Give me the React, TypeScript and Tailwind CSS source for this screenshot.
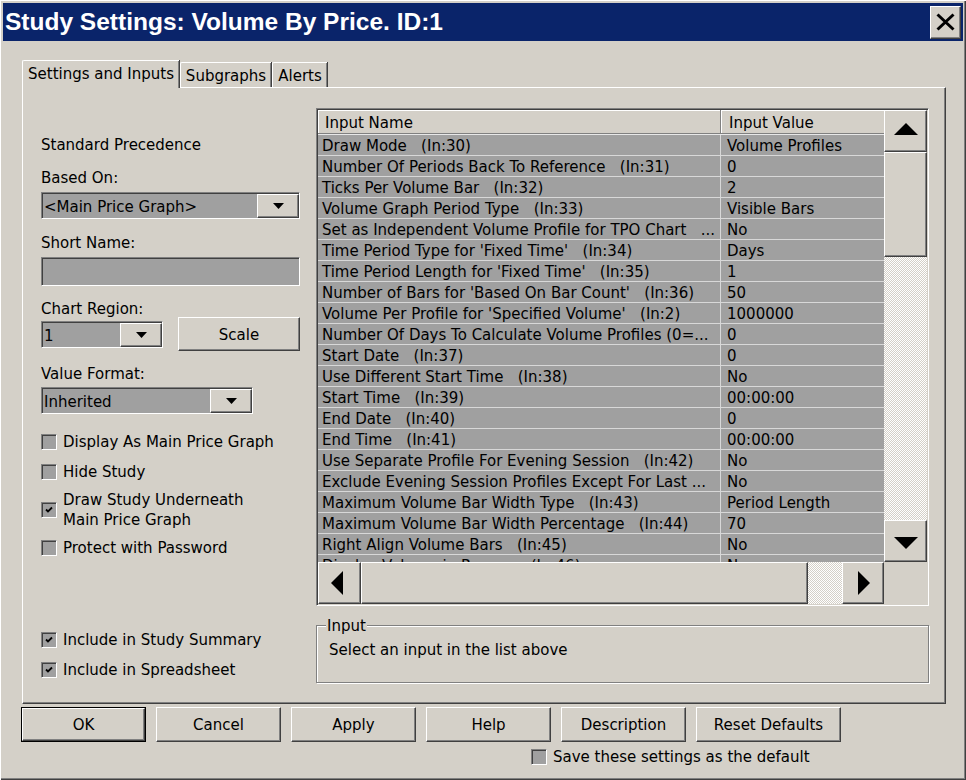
import React from "react";

const raised =
	"border border-t-white border-l-white border-r-[#404040] border-b-[#404040] shadow-[inset_-1px_-1px_#808080]";
const sunken =
	"border border-t-[#808080] border-l-[#808080] border-r-white border-b-white shadow-[inset_1px_1px_#404040]";
const checker =
	"bg-[repeating-conic-gradient(#ffffff_0_25%,#d4d0c8_0_50%)] bg-[length:2px_2px]";

const rows: [string, string][] = [
	["Draw Mode   (In:30)", "Volume Profiles"],
	["Number Of Periods Back To Reference   (In:31)", "0"],
	["Ticks Per Volume Bar   (In:32)", "2"],
	["Volume Graph Period Type   (In:33)", "Visible Bars"],
	["Set as Independent Volume Profile for TPO Chart   ...", "No"],
	["Time Period Type for 'Fixed Time'   (In:34)", "Days"],
	["Time Period Length for 'Fixed Time'   (In:35)", "1"],
	["Number of Bars for 'Based On Bar Count'   (In:36)", "50"],
	["Volume Per Profile for 'Specified Volume'   (In:2)", "1000000"],
	["Number Of Days To Calculate Volume Profiles (0=...", "0"],
	["Start Date   (In:37)", "0"],
	["Use Different Start Time   (In:38)", "No"],
	["Start Time   (In:39)", "00:00:00"],
	["End Date   (In:40)", "0"],
	["End Time   (In:41)", "00:00:00"],
	["Use Separate Profile For Evening Session   (In:42)", "No"],
	["Exclude Evening Session Profiles Except For Last ...", "No"],
	["Maximum Volume Bar Width Type   (In:43)", "Period Length"],
	["Maximum Volume Bar Width Percentage   (In:44)", "70"],
	["Right Align Volume Bars   (In:45)", "No"],
	["Display Volume in Ranges   (In:46)", "No"],
];

function Arrow({ dir }: { dir: "up" | "down" | "left" | "right" }) {
	const pts = {
		up: "0,12 12,0 24,12",
		down: "0,0 24,0 12,12",
		left: "12,0 12,24 0,12",
		right: "0,0 0,24 12,12",
	}[dir];
	const vertical = dir === "up" || dir === "down";
	return (
		<svg width={vertical ? 24 : 12} height={vertical ? 12 : 24}>
			<polygon points={pts} fill="#000" />
		</svg>
	);
}

function Combo({ value, width }: { value: string; width: string }) {
	return (
		<div className={`${sunken} ${width} h-[27px] bg-[#a0a0a0] flex items-stretch pl-[2px] pt-px`}>
			<div className="flex-1 leading-[24px] pt-px whitespace-nowrap">{value}</div>
			<div className={`${raised} w-[42px] bg-[#d4d0c8] flex items-center justify-center`}>
				<svg width="11" height="6">
					<polygon points="0,0 11,0 5.5,6" fill="#000" />
				</svg>
			</div>
		</div>
	);
}

function Check({ checked }: { checked?: boolean }) {
	return (
		<div className={`${sunken} w-[16px] h-[16px] bg-[#a0a0a0] flex items-center justify-center shrink-0`}>
			{checked && (
				<svg width="8" height="8" viewBox="0 0 8 8">
					<polyline points="1,3.5 3,5.5 7,1.5" fill="none" stroke="#000" strokeWidth="1.8" />
				</svg>
			)}
		</div>
	);
}

function CheckRow({ label, checked, className }: { label: React.ReactNode; checked?: boolean; className: string }) {
	return (
		<div className={`flex items-center gap-[6px] ${className}`}>
			<Check checked={checked} />
			<div className="leading-[20px]">{label}</div>
		</div>
	);
}

function Button({ label, width = "w-[125px]", def }: { label: string; width?: string; def?: boolean }) {
	if (def) {
		return (
			<div className={`${width} h-[35px] border border-black flex`}>
				<div className={`${raised} flex-1 flex items-center justify-center pt-px`}>{label}</div>
			</div>
		);
	}
	return <div className={`${raised} ${width} h-[35px] flex items-center justify-center pt-[2px]`}>{label}</div>;
}

export default function App() {
	return (
		<div className="w-[966px] h-[780px] bg-[#d4d0c8] text-black text-[15px] font-['DejaVu_Sans',sans-serif] shadow-[inset_1px_1px_#ffffff,inset_-1px_-1px_#404040,inset_-2px_-2px_#808080] flex flex-col overflow-hidden">
			{/* title bar */}
			<div className="mx-[3px] mt-[3px] h-[38px] bg-[#0a246a] flex items-center justify-between pl-[2px] pr-[2px]">
				<div className="text-white font-['Liberation_Sans',sans-serif] font-bold text-[24.5px] leading-none pt-px">
					Study Settings: Volume By Price. ID:1
				</div>
				<div className={`${raised} w-[31px] h-[33px] bg-[#d4d0c8] flex items-center justify-center`}>
					<svg width="19" height="18">
						<path d="M1.5 1.5 L17.5 16.5 M17.5 1.5 L1.5 16.5" stroke="#000" strokeWidth="3" />
					</svg>
				</div>
			</div>

			{/* tabs */}
			<div className="ml-[22px] mt-[19px] h-[27px] flex items-end">
				<div className="relative z-10 -mb-px h-[28px] w-[157px] bg-[#d4d0c8] border-t border-l border-white rounded-tl-[2px] shadow-[inset_-1px_0_#808080,1px_0_#404040] flex items-center justify-center">
					Settings and Inputs
				</div>
				<div className="h-[25px] w-[91px] border-t border-l border-white rounded-tl-[2px] shadow-[inset_-1px_0_#808080,1px_0_#404040] ml-px flex items-center justify-center pt-[2px]">
					Subgraphs
				</div>
				<div className="h-[25px] w-[55px] border-t border-l border-white rounded-tl-[2px] shadow-[inset_-1px_0_#808080,1px_0_#404040] ml-px flex items-center justify-center pt-[2px]">
					Alerts
				</div>
			</div>

			{/* panel */}
			<div className="ml-[22px] w-[924px] h-[617px] border-t border-l border-white border-r border-b border-r-[#404040] border-b-[#404040] shadow-[inset_-1px_-1px_#808080] flex pl-[18px]">
				<div className="w-[259px] flex flex-col">
					<div className="mt-[47px] leading-[18px] pt-px -mb-px">Standard Precedence</div>
					<div className="mt-[15px] leading-[18px] pt-px -mb-px">Based On:</div>
					<div className="mt-[6px]">
						<Combo value="<Main Price Graph>" width="w-[259px]" />
					</div>
					<div className="mt-[14px] leading-[18px] pt-px -mb-px">Short Name:</div>
					<div className={`${sunken} mt-[6px] h-[29px] bg-[#a0a0a0]`} />
					<div className="mt-[13px] leading-[18px] pt-px -mb-px">Chart Region:</div>
					<div className="h-[34px] flex items-center justify-between">
						<Combo value="1" width="w-[122px]" />
						<div className={`${raised} w-[122px] h-[34px] flex items-center justify-center pt-[2px]`}>Scale</div>
					</div>
					<div className="mt-[13px] leading-[18px] pt-px -mb-px">Value Format:</div>
					<div className="mt-[5px]">
						<Combo value="Inherited" width="w-[212px]" />
					</div>
					<CheckRow className="mt-[18px]" label="Display As Main Price Graph" />
					<CheckRow className="mt-[10px]" label="Hide Study" />
					<CheckRow
						className="mt-[8px]"
						checked
						label={
							<>
								Draw Study Underneath
								<br />
								Main Price Graph
							</>
						}
					/>
					<CheckRow className="mt-[8px]" label="Protect with Password" />
					<CheckRow className="mt-[72px]" checked label="Include in Study Summary" />
					<CheckRow className="mt-[10px]" checked label="Include in Spreadsheet" />
				</div>

				<div className="ml-[16px] w-[613px] flex flex-col">
					{/* inputs grid */}
					<div className={`${sunken} mt-[20px] h-[498px] p-px flex flex-col`}>
						<div className="flex h-[452px]">
							<div className="flex-1 overflow-hidden bg-[#a0a0a0]">
								<div className="h-[24px] flex bg-[#d4d0c8] border-b border-[#808080] shadow-[0_1px_#e8e8e8]">
									<div className="w-[403px] pl-[6px] leading-[23px] pt-px border-t border-l border-white">Input Name</div>
									<div className="flex-1 pl-[7px] leading-[23px] pt-px border-t border-l border-white shadow-[-1px_0_#808080]">
										Input Value
									</div>
								</div>
								<div className="mt-px">
									{rows.map(([name, value]) => (
										<div key={name} className="h-[21px] flex border-b border-[#d8d8d8]">
											<div className="w-[403px] pl-[4px] pt-px leading-[20px] whitespace-pre overflow-hidden border-r border-[#d8d8d8]">
												{name}
											</div>
											<div className="flex-1 pl-[6px] pt-px leading-[20px] whitespace-pre overflow-hidden">{value}</div>
										</div>
									))}
								</div>
							</div>
							<div className="w-[43px] flex flex-col">
								<div className={`${raised} h-[42px] flex items-center justify-center pb-[5px]`}>
									<Arrow dir="up" />
								</div>
								<div className={`${raised} h-[105px]`} />
								<div className={`flex-1 ${checker}`} />
								<div className={`${raised} h-[42px] flex items-center justify-center pt-[3px]`}>
									<Arrow dir="down" />
								</div>
							</div>
						</div>
						<div className="flex h-[42px]">
							<div className={`${raised} w-[43px] flex items-center justify-center pr-[6px]`}>
								<Arrow dir="left" />
							</div>
							<div className={`${raised} w-[447px]`} />
							<div className={`w-[34px] ${checker}`} />
							<div className={`${raised} w-[42px] flex items-center justify-center pl-[2px]`}>
								<Arrow dir="right" />
							</div>
							<div className="flex-1" />
						</div>
					</div>

					{/* input group */}
					<div className="relative mt-[19px] h-[58px] border border-[#808080] shadow-[inset_1px_1px_#ffffff,1px_1px_#ffffff] pl-[12px] pt-[15px]">
						<div className="absolute -top-[9px] left-[9px] px-px bg-[#d4d0c8] leading-[18px]">Input</div>
						<div className="leading-[18px]">Select an input in the list above</div>
					</div>
				</div>
			</div>

			{/* buttons */}
			<div className="mt-[3px] ml-[21px] flex gap-[10px]">
				<Button label="OK" def />
				<Button label="Cancel" />
				<Button label="Apply" />
				<Button label="Help" />
				<Button label="Description" />
				<Button label="Reset Defaults" width="w-[145px]" />
			</div>
			<div className="mt-[6px] ml-[531px] flex items-center gap-[6px]">
				<Check />
				<div className="leading-[18px]">Save these settings as the default</div>
			</div>
		</div>
	);
}
